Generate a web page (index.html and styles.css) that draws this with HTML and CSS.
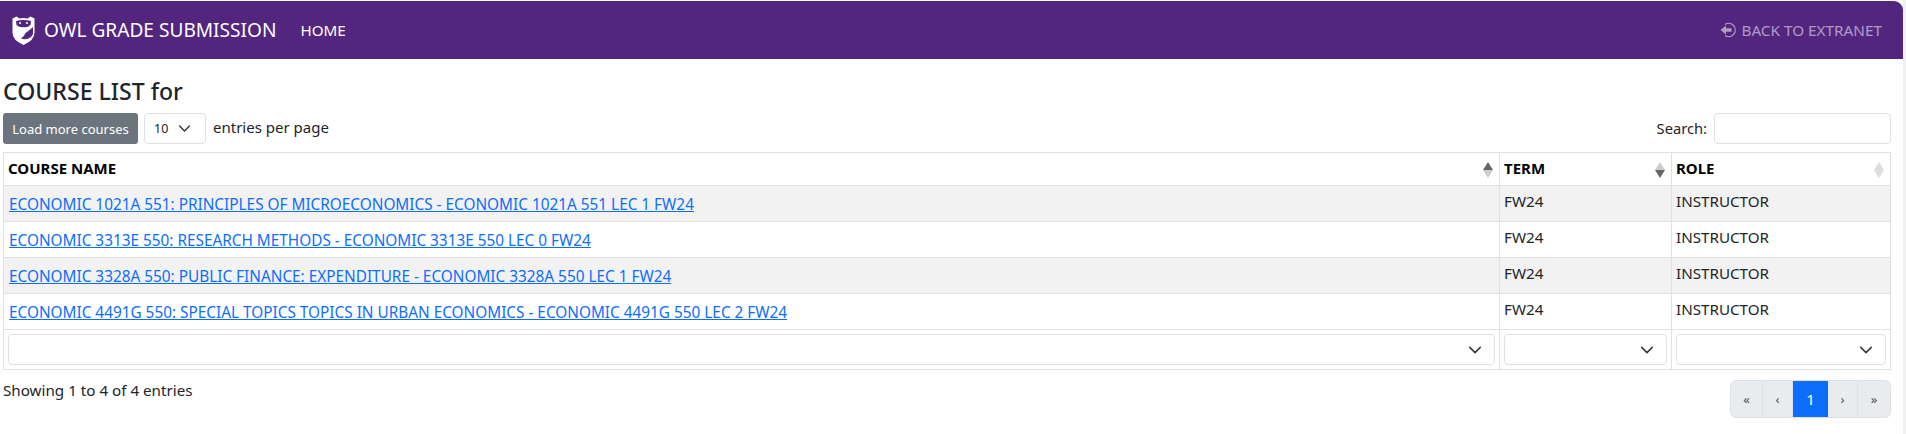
FILE: index.html
```html
<!DOCTYPE html>
<html lang="en">
  <head>
    <meta charset="UTF-8" />
    <title>OWL Grade Submission</title>
    <link rel="stylesheet" href="styles.css">
  </head>

  <body>
    <div class="page">
      <nav class="navbar">
        <div class="nav-left">
          <a class="brand" href="#">
            <svg class="logo" viewBox="0 0 23 29" width="23" height="29">
              <path fill="#fff" d="M0.5 2.5 L4.5 0.5 L7.5 2.5 Q11.5 1.5 15.5 2.5 L18.5 0.5 L22.5 2.5 V17 Q22.5 24 11.5 29 Q0.5 24 0.5 17 Z"/>
              <path fill="#52267f" d="M4 5 Q11.5 3 19 5 L18.5 9 Q15 12 11.5 11 Q8 12 4.5 9 Z"/>
              <path fill="#52267f" d="M21 11 V17 Q21 19 19 21 Q14 24.5 9 22.5 Q12 21 13.5 17 Q16 15.5 21 11 Z"/>
              <circle fill="#fff" cx="8" cy="7" r="1"/>
              <circle fill="#fff" cx="15" cy="7" r="1"/>
            </svg>
            <span>OWL GRADE SUBMISSION</span>
          </a>
          <a class="nav-link" href="#">HOME</a>
        </div>
        <a class="back-link" href="#">
          <svg viewBox="0 0 16 16" width="16" height="16">
            <path fill="none" stroke="currentColor" stroke-width="1.3" d="M5 2.5 A6.6 6.6 0 1 1 5 13.5"/>
            <path fill="currentColor" d="M0.5 8 L6 3.5 V6.2 H11.5 V9.8 H6 V12.5 Z"/>
          </svg>
          BACK TO EXTRANET
        </a>
      </nav>

      <main class="content">
        <h1>COURSE LIST for</h1>

        <div class="toolbar">
          <div class="toolbar-left">
            <button class="load-btn">Load more courses</button>
            <div class="fake-select page-size">10<svg class="chev" viewBox="0 0 16 16" width="16" height="16"><path d="M2 5l6 6 6-6" fill="none" stroke="#343a40" stroke-width="1.8" stroke-linecap="round" stroke-linejoin="round"/></svg></div>
            <span class="toolbar-text">entries per page</span>
          </div>
          <label class="search"><span class="toolbar-text">Search:</span> <input type="text"></label>
        </div>

        <table class="course-table">
          <thead>
            <tr>
              <th class="col-name">COURSE NAME<span class="sort asc"></span></th>
              <th class="col-term">TERM<span class="sort desc"></span></th>
              <th class="col-role">ROLE<span class="sort off"></span></th>
            </tr>
          </thead>
          <tbody>
            <tr class="odd">
              <td><a href="#">ECONOMIC 1021A 551: PRINCIPLES OF MICROECONOMICS - ECONOMIC 1021A 551 LEC 1 FW24</a></td>
              <td>FW24</td>
              <td>INSTRUCTOR</td>
            </tr>
            <tr>
              <td><a href="#">ECONOMIC 3313E 550: RESEARCH METHODS - ECONOMIC 3313E 550 LEC 0 FW24</a></td>
              <td>FW24</td>
              <td>INSTRUCTOR</td>
            </tr>
            <tr class="odd">
              <td><a href="#">ECONOMIC 3328A 550: PUBLIC FINANCE: EXPENDITURE - ECONOMIC 3328A 550 LEC 1 FW24</a></td>
              <td>FW24</td>
              <td>INSTRUCTOR</td>
            </tr>
            <tr>
              <td><a href="#">ECONOMIC 4491G 550: SPECIAL TOPICS TOPICS IN URBAN ECONOMICS - ECONOMIC 4491G 550 LEC 2 FW24</a></td>
              <td>FW24</td>
              <td>INSTRUCTOR</td>
            </tr>
          </tbody>
          <tfoot>
            <tr>
              <td><div class="fake-select"><svg class="chev" viewBox="0 0 16 16" width="16" height="16"><path d="M2 5l6 6 6-6" fill="none" stroke="#343a40" stroke-width="1.8" stroke-linecap="round" stroke-linejoin="round"/></svg></div></td>
              <td><div class="fake-select"><svg class="chev" viewBox="0 0 16 16" width="16" height="16"><path d="M2 5l6 6 6-6" fill="none" stroke="#343a40" stroke-width="1.8" stroke-linecap="round" stroke-linejoin="round"/></svg></div></td>
              <td><div class="fake-select"><svg class="chev" viewBox="0 0 16 16" width="16" height="16"><path d="M2 5l6 6 6-6" fill="none" stroke="#343a40" stroke-width="1.8" stroke-linecap="round" stroke-linejoin="round"/></svg></div></td>
            </tr>
          </tfoot>
        </table>

        <div class="table-bottom">
          <div class="info">Showing 1 to 4 of 4 entries</div>
          <ul class="pagination">
            <li class="end">«</li>
            <li>‹</li>
            <li class="active">1</li>
            <li>›</li>
            <li class="end">»</li>
          </ul>
        </div>
      </main>
    </div>
  </body>
</html>
```

FILE: styles.css
```css
* {
  box-sizing: border-box;
}

html {
  background-color: #f1f1f1;
}

body {
  margin: 0;
  padding-right: 3px;
  font-family: "Noto Sans", Arial, sans-serif;
  font-size: 15.2px;
  color: #212529;
}

.page {
  background-color: white;
  height: 434px;
  padding-top: 1px;
}

.navbar {
  display: flex;
  justify-content: space-between;
  align-items: center;
  height: 58px;
  padding: 0 21px 0 12px;
  background-color: #52267f;
  border-top-right-radius: 9px;
}

.nav-left {
  display: flex;
  align-items: center;
}

.navbar a {
  text-decoration: none;
}

.brand {
  display: flex;
  align-items: center;
  gap: 9px;
  color: white;
  font-size: 19.1px;
}

.nav-link {
  margin-left: 24px;
  color: white;
  font-size: 15.2px;
}

.back-link {
  display: flex;
  align-items: center;
  gap: 5px;
  color: rgba(255, 255, 255, 0.55);
  font-size: 15.3px;
}

.content {
  padding: 0 12px 0 3px;
}

h1 {
  margin: 19px 0 9px;
  font-size: 23.1px;
  font-weight: 500;
  line-height: 26px;
}

.toolbar {
  display: flex;
  justify-content: space-between;
  align-items: center;
  height: 31px;
  margin-bottom: 8px;
}

.toolbar-left {
  display: flex;
  align-items: center;
}

.toolbar-text {
  margin-bottom: 3px;
  font-size: 15px;
}

.load-btn {
  width: 135px;
  height: 31px;
  margin-right: 6px;
  padding: 0;
  background-color: #6c757d;
  border: none;
  border-radius: 3px;
  color: white;
  font-family: inherit;
  font-size: 13px;
}

.fake-select {
  display: flex;
  justify-content: flex-end;
  align-items: center;
  height: 31px;
  padding-right: 12px;
  background-color: white;
  border: 1px solid #dee2e6;
  border-radius: 4px;
}

.page-size {
  justify-content: space-between;
  width: 62px;
  margin-right: 7px;
  padding-left: 9px;
  padding-right: 14px;
  font-size: 12.5px;
}

.chev {
  width: 14px;
  height: 14px;
}

.page-size .chev {
  width: 13px;
  height: 13px;
}

.search {
  display: flex;
  align-items: center;
  gap: 7px;
}

.search .toolbar-text {
  margin-bottom: 2px;
  font-size: 14.7px;
}

.search input {
  width: 177px;
  height: 31px;
  border: 1px solid #dee2e6;
  border-radius: 4px;
}

.course-table {
  width: 100%;
  border-collapse: collapse;
  border: 1px solid #dee2e6;
}

.course-table th,
.course-table td {
  border: 1px solid #dee2e6;
  padding: 0 4px;
  text-align: left;
}

.course-table td {
  vertical-align: top;
  padding-top: 5px;
}

.course-table th {
  position: relative;
  height: 33px;
  padding-bottom: 2px;
  color: black;
  font-size: 15px;
  font-weight: 700;
}

.col-name {
  width: 1496px;
}

.col-term {
  width: 172px;
}

tbody tr {
  height: 36px;
}

tbody tr.odd td {
  background-color: #f2f2f2;
}

tbody a {
  position: relative;
  top: 3px;
  margin-left: 1px;
  color: #0d6efd;
  font-size: 15.35px;
}

tfoot td {
  height: 40px;
}

.course-table tfoot td {
  padding: 4px 4px 0;
}

.sort {
  position: absolute;
  top: 9px;
  right: 6px;
  width: 10px;
  height: 16px;
}

.sort::before,
.sort::after {
  content: "";
  position: absolute;
  left: 0;
  border-left: 5px solid transparent;
  border-right: 5px solid transparent;
}

.sort::before {
  top: 0;
  border-bottom: 8px solid #ccc;
}

.sort::after {
  bottom: 0;
  border-top: 8px solid #ccc;
}

.sort.asc::before {
  border-bottom-color: #666;
}

.sort.desc::after {
  border-top-color: #666;
}

.sort.off::before {
  border-bottom-color: #ddd;
}

.sort.off::after {
  border-top-color: #ddd;
}

.table-bottom {
  display: flex;
  justify-content: space-between;
  margin-top: 10px;
}

.pagination {
  display: flex;
  margin: 0;
  padding: 0;
  list-style: none;
  height: 38px;
  border: 1px solid #dee2e6;
  border-radius: 6px;
  background-color: #e9ecef;
  overflow: hidden;
}

.pagination li {
  display: flex;
  justify-content: center;
  align-items: center;
  width: 30px;
  border-right: 1px solid #dee2e6;
  color: #495057;
  font-size: 13px;
}

.pagination li.end {
  width: 32px;
}

.pagination li:last-child {
  border-right: none;
}

.pagination li.active {
  width: 35px;
  background-color: #0d6efd;
  border-right: none;
  color: white;
  font-size: 15px;
}
```
